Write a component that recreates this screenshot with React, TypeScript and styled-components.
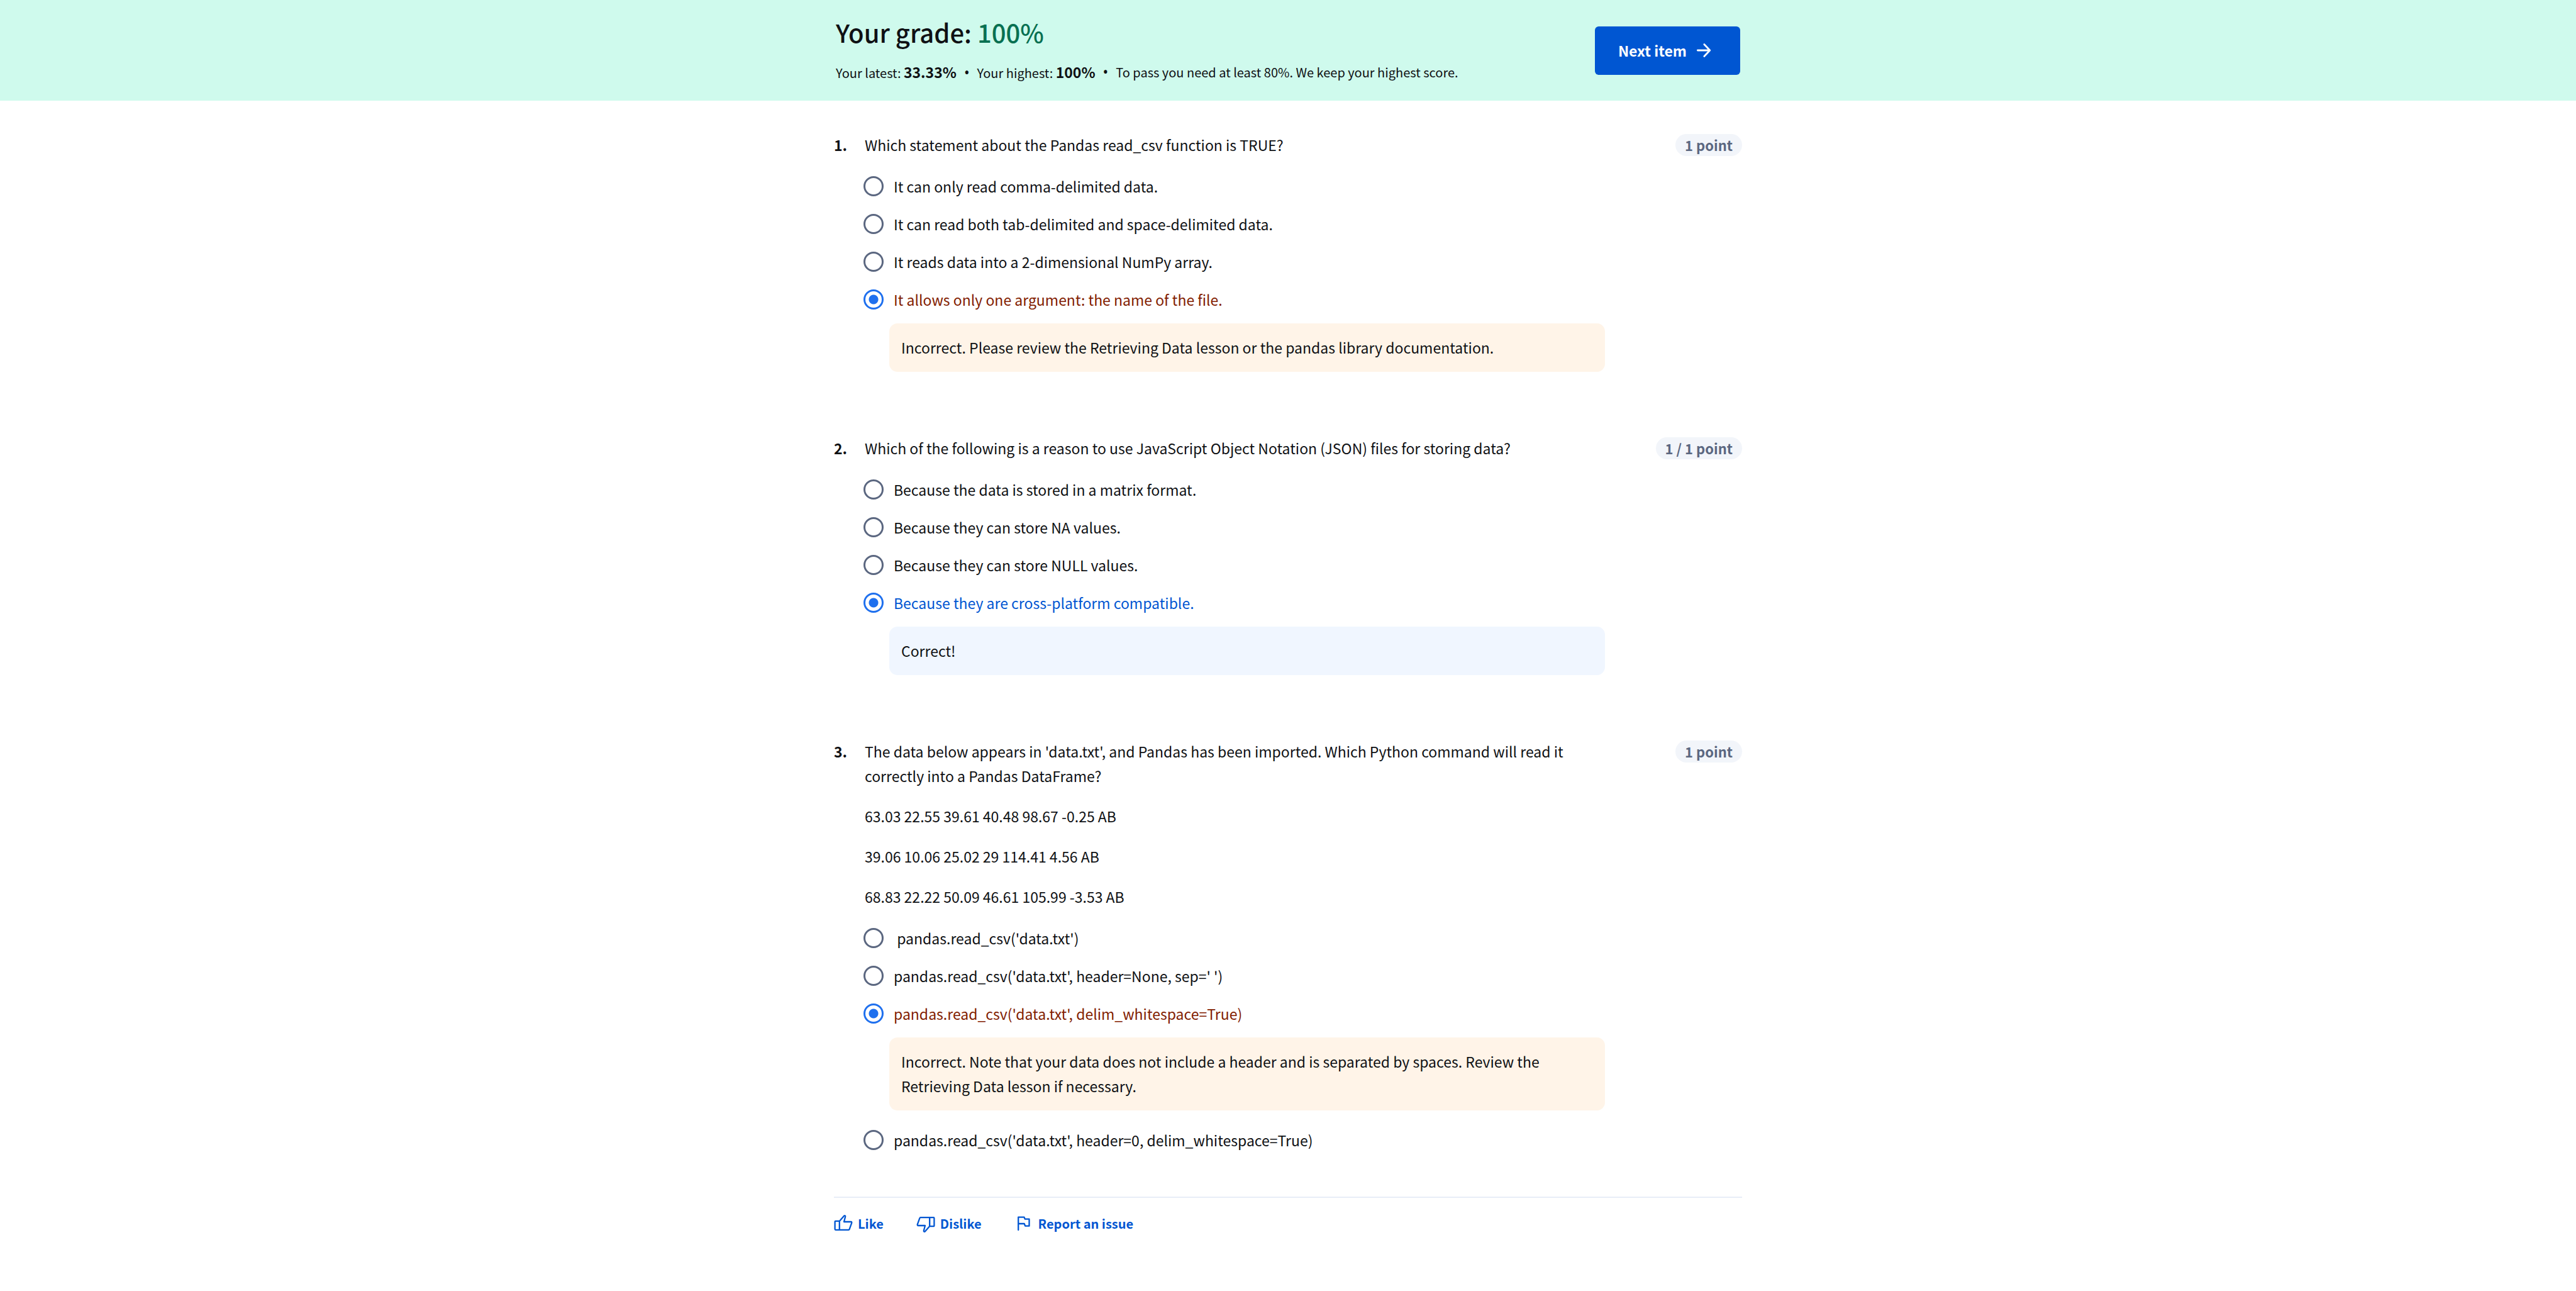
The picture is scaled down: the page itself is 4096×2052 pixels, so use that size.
import React from 'react';
import styled, { createGlobalStyle } from 'styled-components';

const GlobalStyle = createGlobalStyle`
  *, *::before, *::after { box-sizing: border-box; }
  body {
    margin: 0;
    background: #fff;
    color: #0f1114;
    font-family: "Noto Sans CJK SC", "Noto Sans", sans-serif;
    font-size: 23px;
    line-height: 39px;
  }
  h1, p, ol, ul, fieldset, legend { margin: 0; padding: 0; border: 0; font: inherit; }
  button { font: inherit; border: 0; cursor: pointer; }
`;

const Banner = styled.header`
  background: #cffaed;
`;

const BannerInner = styled.div`
  max-width: 1444px;
  min-height: 160px;
  margin: 0 auto;
  padding: 20px 3px;
  display: flex;
  align-items: center;
  justify-content: space-between;
`;

const GradeBlock = styled.div`
  display: flex;
  flex-direction: column;
  gap: 14px;
  padding-bottom: 4px;
`;

const GradeTitle = styled.h1`
  && { font-size: 40px; font-weight: 500; line-height: 60px; }
`;

const GradeValue = styled.span`
  color: #087051;
`;

const Summary = styled.ul`
  display: flex;
  list-style: none;
  && { font-size: 20px; }
  li + li::before { content: "•"; margin: 0 12px; font-family: "Noto Sans", sans-serif; font-size: 23px; line-height: 1; }
  strong { font-size: 23px; font-weight: 700; }
`;

const NextButton = styled.button`
  display: flex;
  align-items: center;
  gap: 14px;
  height: 77px;
  padding: 0 45px 0 37px;
  border-radius: 6px;
  background: #0056d2;
  color: #fff;
  && { font-weight: 700; }
`;

const Page = styled.main`
  max-width: 1444px;
  margin: 0 auto;
  padding-top: 51px;
`;

const Question = styled.section`
  display: grid;
  grid-template-columns: 49px minmax(0, 1177px) minmax(0, 1fr);
  margin-bottom: 85px;
`;

const Num = styled.span`
  font-weight: 700;
`;

const Prompt = styled.legend`
  display: flex;
  flex-direction: column;
  gap: 25px;
  && { margin-bottom: 16px; }
`;

const Badge = styled.span`
  justify-self: end;
  align-self: start;
  margin: 2px 0;
  padding: 0 15px;
  border-radius: 18px;
  background: #f2f5fa;
  color: #5b6780;
  font-size: 22px;
  font-weight: 700;
  line-height: 35px;
`;

type Tone = 'wrong' | 'right';
type OptionData = { text: string; tone?: Tone; feedback?: string };
type QuestionData = { prompt: string[]; points: string; options: OptionData[] };

const Option = styled.label<{ $tone?: Tone }>`
  display: flex;
  align-items: center;
  gap: 16px;
  min-height: 60px;
  margin-left: -2px;
  white-space: pre-wrap;
  color: ${(p) => (p.$tone === 'wrong' ? '#822000' : p.$tone === 'right' ? '#0056d2' : 'inherit')};
`;

const Radio = styled.input`
  appearance: none;
  flex: none;
  width: 32px;
  height: 32px;
  margin: 0;
  border: 3px solid #5b6780;
  border-radius: 50%;
  &:checked {
    border-color: #1f70ee;
    background: radial-gradient(circle, #1f70ee 7px, transparent 8px);
  }
`;

const Feedback = styled.p<{ $tone: Tone }>`
  && {
    margin: 8px 0 17px 39px;
    padding: 19px;
  }
  border-radius: 13px;
  background: ${(p) => (p.$tone === 'wrong' ? '#fff4e8' : '#f0f6ff')};
`;

const Footer = styled.footer`
  display: flex;
  gap: 52px;
  margin-top: -25px;
  padding-top: 21px;
  border-top: 2px solid #e8eef7;
`;

const FooterButton = styled.button`
  display: flex;
  align-items: center;
  gap: 8px;
  padding: 0;
  background: none;
  color: #0056d2;
  && { font-size: 20px; font-weight: 700; line-height: 39px; }
`;

const questions: QuestionData[] = [
  {
    prompt: ['Which statement about the Pandas read_csv function is TRUE?'],
    points: '1 point',
    options: [
      { text: 'It can only read comma-delimited data.' },
      { text: 'It can read both tab-delimited and space-delimited data.' },
      { text: 'It reads data into a 2-dimensional NumPy array.' },
      {
        text: 'It allows only one argument: the name of the file.',
        tone: 'wrong',
        feedback: 'Incorrect. Please review the Retrieving Data lesson or the pandas library documentation.',
      },
    ],
  },
  {
    prompt: ['Which of the following is a reason to use JavaScript Object Notation (JSON) files for storing data?'],
    points: '1 / 1 point',
    options: [
      { text: 'Because the data is stored in a matrix format.' },
      { text: 'Because they can store NA values.' },
      { text: 'Because they can store NULL values.' },
      { text: 'Because they are cross-platform compatible.', tone: 'right', feedback: 'Correct!' },
    ],
  },
  {
    prompt: [
      "The data below appears in 'data.txt', and Pandas has been imported. Which Python command will read it correctly into a Pandas DataFrame?",
      '63.03 22.55 39.61 40.48 98.67 -0.25 AB',
      '39.06 10.06 25.02 29 114.41 4.56 AB',
      '68.83 22.22 50.09 46.61 105.99 -3.53 AB',
    ],
    points: '1 point',
    options: [
      { text: " pandas.read_csv('data.txt')" },
      { text: "pandas.read_csv('data.txt', header=None, sep=' ')" },
      {
        text: "pandas.read_csv('data.txt', delim_whitespace=True)",
        tone: 'wrong',
        feedback:
          'Incorrect. Note that your data does not include a header and is separated by spaces. Review the Retrieving Data lesson if necessary.',
      },
      { text: "pandas.read_csv('data.txt', header=0, delim_whitespace=True)" },
    ],
  },
];

const ArrowIcon = () => (
  <svg width="26" height="26" viewBox="0 0 26 26" fill="none" stroke="currentColor" strokeWidth="2.8" strokeLinecap="round" strokeLinejoin="round" aria-hidden="true">
    <path d="M3.4 13H22.5M13.8 3.5l9 9.5-9 9.5" />
  </svg>
);

const ThumbIcon = ({ down }: { down?: boolean }) => (
  <svg width="30" height="30" viewBox="0 0 30 30" fill="none" stroke="currentColor" strokeWidth="2.3" strokeLinejoin="round" aria-hidden="true">
    <path
      transform={down ? 'rotate(180 15 15)' : undefined}
      d="M8.8 10.9H2.6q-1 0-1 1v11.9q0 1 1 1h6.2zl7.4-8.3q.7-.7 1.4-.2.8.4.6 1.3L16 12h11.3q1 0 1 1v.6l-3.7 10.3q-.3.9-1.3.9H8.8"
    />
  </svg>
);

const FlagIcon = () => (
  <svg width="30" height="30" viewBox="0 0 30 30" fill="none" stroke="currentColor" strokeWidth="2.3" strokeLinejoin="round" strokeLinecap="round" aria-hidden="true">
    <path d="M6.2 25V4.6h9.3l1.2 3.1h6.8v11h-6.4l-1.4-3.7H6.2" />
  </svg>
);

export default function App() {
  return (
    <>
      <GlobalStyle />
      <Banner>
        <BannerInner>
          <GradeBlock>
            <GradeTitle>
              Your grade: <GradeValue>100%</GradeValue>
            </GradeTitle>
            <Summary>
              <li>Your latest: <strong>33.33%</strong></li>
              <li>Your highest: <strong>100%</strong></li>
              <li>To pass you need at least 80%. We keep your highest score.</li>
            </Summary>
          </GradeBlock>
          <NextButton type="button">
            Next item
            <ArrowIcon />
          </NextButton>
        </BannerInner>
      </Banner>
      <Page>
        {questions.map((q, qi) => (
          <Question key={qi}>
            <Num>{qi + 1}.</Num>
            <fieldset>
              <Prompt>
                {q.prompt.map((line) => (
                  <span key={line}>{line}</span>
                ))}
              </Prompt>
              {q.options.map((o, oi) => (
                <React.Fragment key={oi}>
                  <Option $tone={o.tone}>
                    <Radio type="radio" name={`question-${qi}`} defaultChecked={!!o.tone} />
                    <span>{o.text}</span>
                  </Option>
                  {o.feedback && <Feedback $tone={o.tone!}>{o.feedback}</Feedback>}
                </React.Fragment>
              ))}
            </fieldset>
            <Badge>{q.points}</Badge>
          </Question>
        ))}
        <Footer>
          <FooterButton type="button"><ThumbIcon />Like</FooterButton>
          <FooterButton type="button"><ThumbIcon down />Dislike</FooterButton>
          <FooterButton type="button"><FlagIcon />Report an issue</FooterButton>
        </Footer>
      </Page>
    </>
  );
}
